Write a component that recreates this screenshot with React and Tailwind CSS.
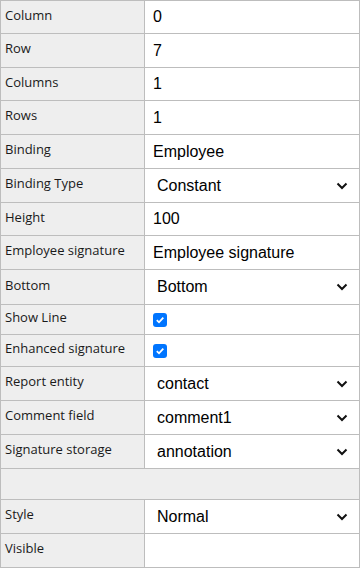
const rows = [
  { label: 'Column', type: 'text', value: '0', h: 'h-[33px]' },
  { label: 'Row', type: 'text', value: '7', h: 'h-[34px]' },
  { label: 'Columns', type: 'text', value: '1', h: 'h-[33px]' },
  { label: 'Rows', type: 'text', value: '1', h: 'h-[34px]' },
  { label: 'Binding', type: 'text', value: 'Employee', h: 'h-[34px]' },
  { label: 'Binding Type', type: 'select', value: 'Constant', h: 'h-[34px]' },
  { label: 'Height', type: 'text', value: '100', h: 'h-[33px]' },
  { label: 'Employee signature', type: 'text', value: 'Employee signature', h: 'h-[34px]' },
  { label: 'Bottom', type: 'select', value: 'Bottom', h: 'h-[35px]' },
  { label: 'Show Line', type: 'check', h: 'h-[30px]' },
  { label: 'Enhanced signature', type: 'check', h: 'h-[32px]' },
  { label: 'Report entity', type: 'select', value: 'contact', h: 'h-[34px]' },
  { label: 'Comment field', type: 'select', value: 'comment1', h: 'h-[34px]' },
  { label: 'Signature storage', type: 'select', value: 'annotation', h: 'h-[34px]' },
  { type: 'blank', h: 'h-[31px]' },
  { label: 'Style', type: 'select', value: 'Normal', h: 'h-[34px]' },
  { label: 'Visible', type: 'empty', h: 'h-[34px]' },
];

function Chevron() {
  return (
    <svg width="12" height="8" viewBox="0 0 12 8" className="shrink-0">
      <path d="M1.5 1.5 L6 6 L10.5 1.5" fill="none" stroke="#111" strokeWidth="2" />
    </svg>
  );
}

function Check() {
  return (
    <span className="flex h-[14px] w-[14px] items-center justify-center rounded-[3px] bg-[#0075ff]">
      <svg width="10" height="10" viewBox="0 0 10 10">
        <path d="M1.8 5.2 L4 7.3 L8.3 2.6" fill="none" stroke="#fff" strokeWidth="1.8" />
      </svg>
    </span>
  );
}

function Value({ row }) {
  if (row.type === 'text') {
    return <span className="pl-2 text-[16px] text-black">{row.value}</span>;
  }
  if (row.type === 'select') {
    return (
      <div className="flex w-full items-center justify-between pl-3 pr-[11px]">
        <span className="text-[16px] text-black">{row.value}</span>
        <Chevron />
      </div>
    );
  }
  if (row.type === 'check') {
    return (
      <div className="pl-2">
        <Check />
      </div>
    );
  }
  return null;
}

export default function App() {
  return (
    <div className="w-[360px] bg-white font-['Liberation_Sans',Arial,sans-serif]">
      <div className="border-t border-l border-r border-[#bdbdbd]">
        {rows.map((row, i) =>
          row.type === 'blank' ? (
            <div key={i} className={`${row.h} border-b border-[#bdbdbd] bg-[#eeeeee]`} />
          ) : (
            <div key={i} className={`${row.h} flex border-b border-[#bdbdbd]`}>
              <div className="flex w-[144px] shrink-0 items-center border-r border-[#bdbdbd] bg-[#eeeeee] pb-[3px] pl-[4px] font-['Open_Sans','Noto_Sans',sans-serif] text-[13px] text-[#1a1a1a]">
                {row.label}
              </div>
              <div className="flex flex-1 items-center">
                <Value row={row} />
              </div>
            </div>
          )
        )}
      </div>
    </div>
  );
}
